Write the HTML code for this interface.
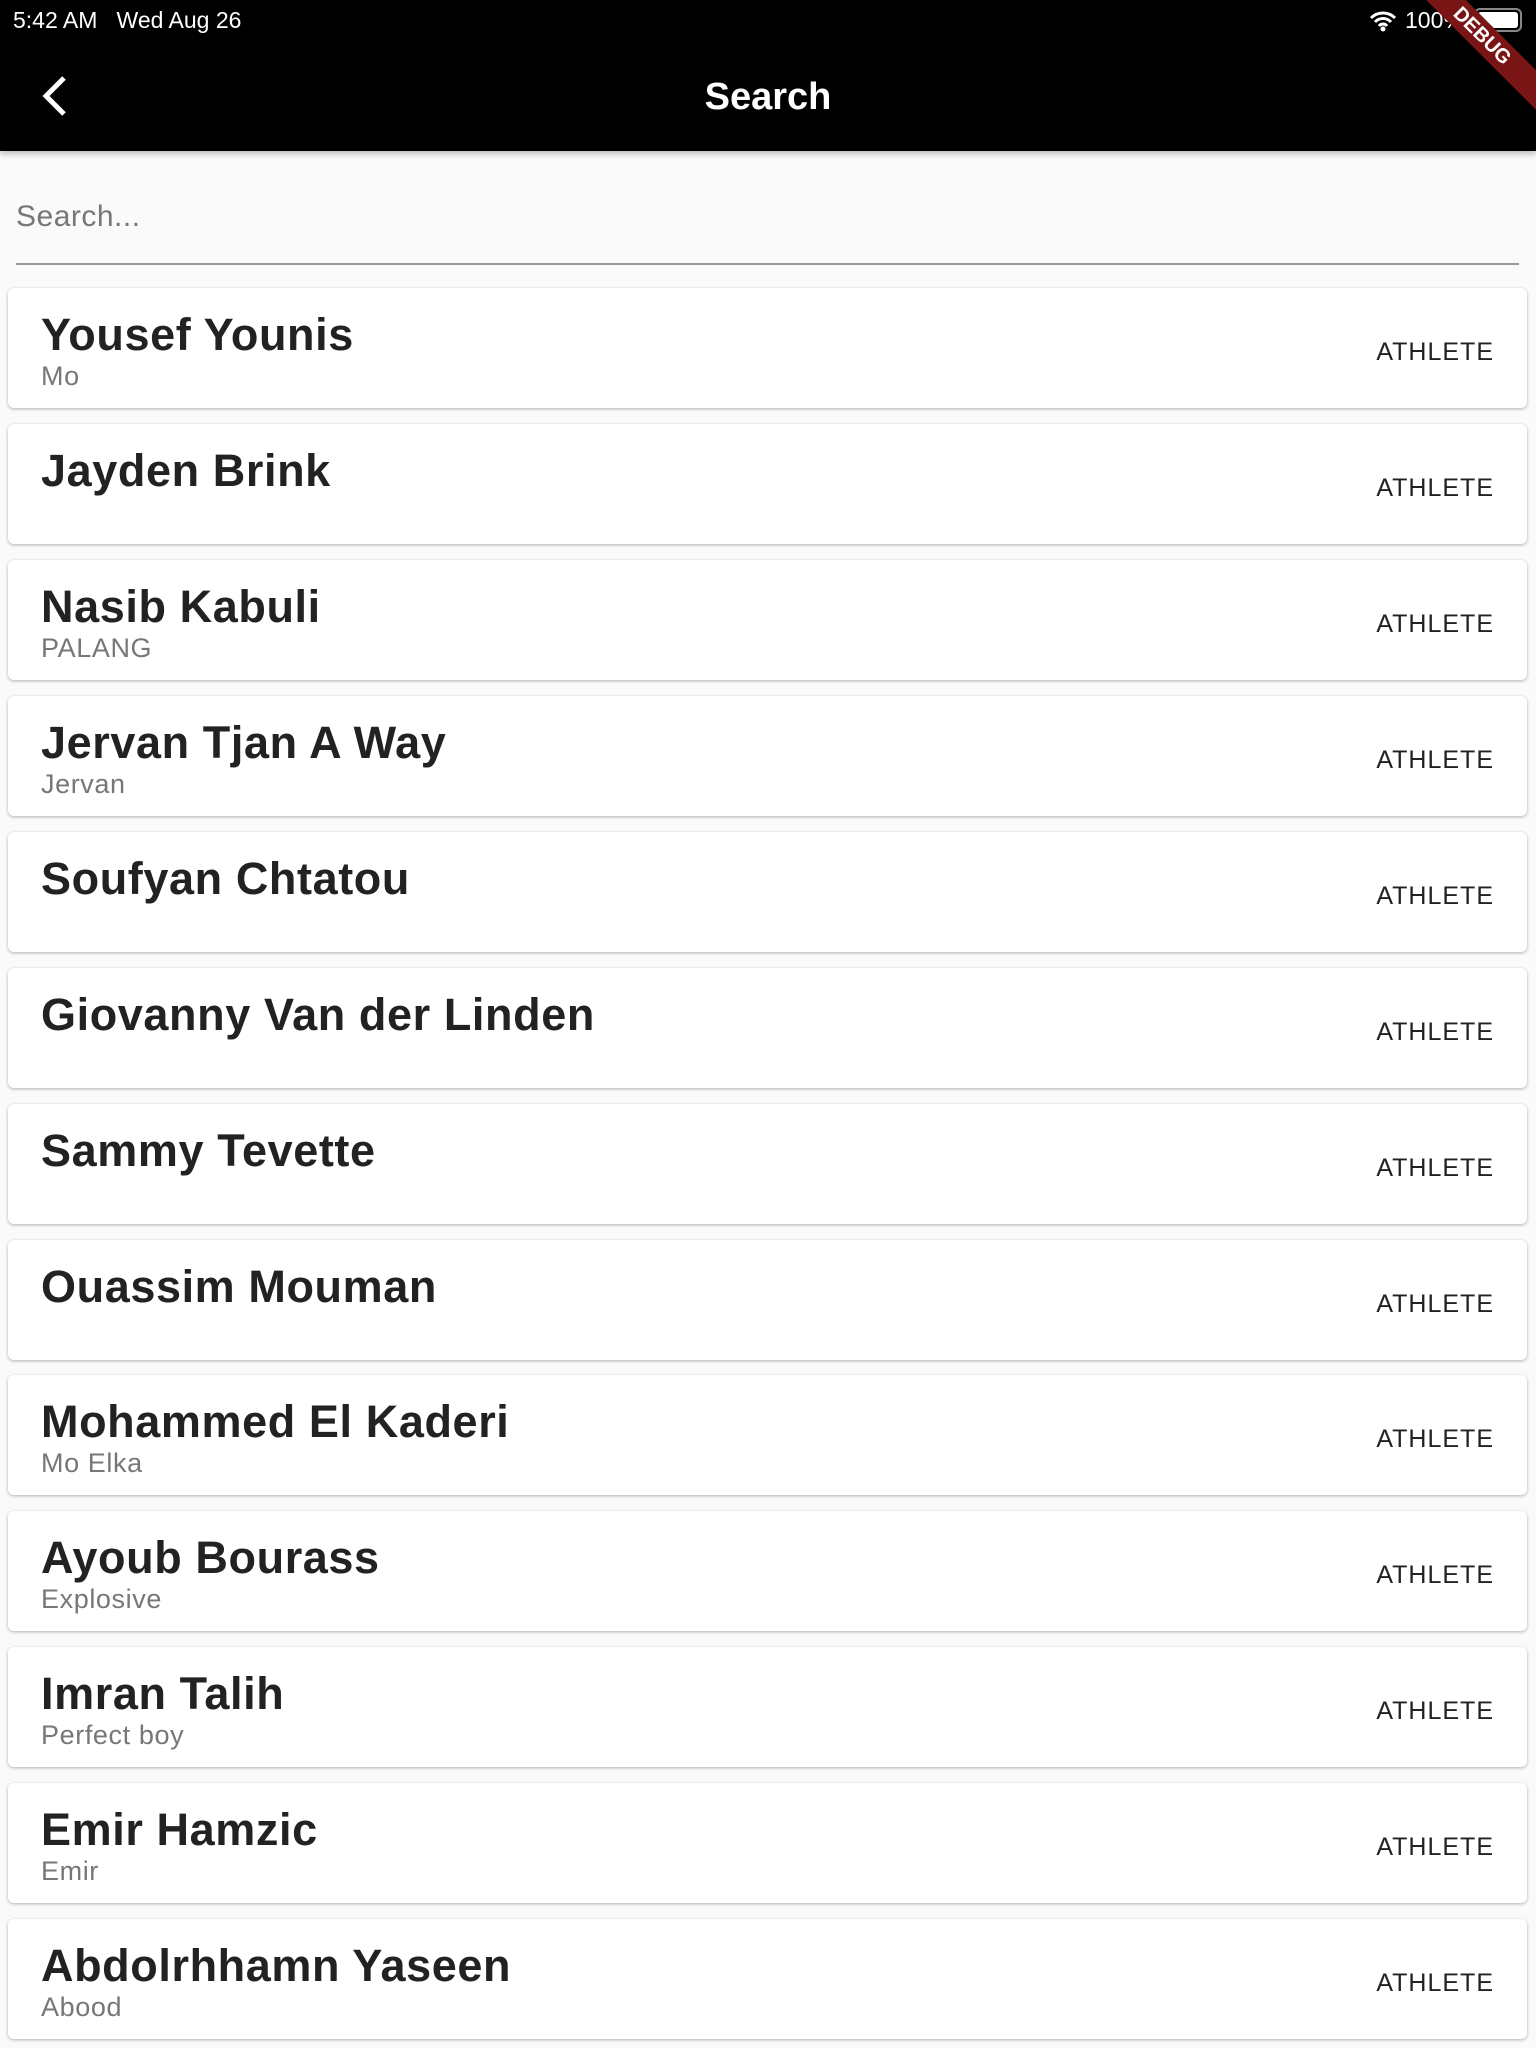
<!DOCTYPE html>
<html><head><meta charset="utf-8">
<style>
*{margin:0;padding:0;box-sizing:border-box}
body{width:1536px;height:2048px;background:#fafafa;font-family:"Liberation Sans",sans-serif;position:relative;overflow:hidden}
.bar{position:absolute;left:0;top:0;width:1536px;height:151px;background:#000;box-shadow:0 3px 6px rgba(0,0,0,.25)}
.st{position:absolute;top:7px;color:#fff;font-size:23px}
.title{position:absolute;left:0;width:1536px;top:76px;text-align:center;color:#fff;font-size:38px;font-weight:bold}
.field{position:absolute;left:16px;top:200px;color:#777;font-size:30px;letter-spacing:.5px}
.line{position:absolute;left:16px;width:1503px;top:263px;height:2px;background:#9a9a9a}
.card{position:absolute;left:8px;width:1519px;height:120px;background:#fff;border-radius:6px;box-shadow:0 1px 3px rgba(0,0,0,.3)}
.n{position:absolute;left:33px;top:21px;font-size:45px;font-weight:bold;color:#222;letter-spacing:.6px}
.s{position:absolute;left:33px;top:73px;font-size:27px;color:#777;letter-spacing:.6px}
.r{position:absolute;right:33px;top:50px;font-size:25px;color:#222;letter-spacing:1px}
</style></head><body>
<div class="bar">
<div class="st" style="left:13px">5:42 AM&nbsp;&nbsp;&nbsp;Wed Aug 26</div>
<svg style="position:absolute;left:1369px;top:10px" width="28" height="22" viewBox="0 0 28 22"><path d="M2 8a17 17 0 0 1 24 0M6 12a11 11 0 0 1 16 0M10 16a5 5 0 0 1 8 0" stroke="#fff" stroke-width="3" fill="none"/><circle cx="14" cy="19" r="2.5" fill="#fff"/></svg>
<div class="st" style="left:1405px">100%</div>
<div style="position:absolute;left:1474px;top:8px;width:48px;height:24px;border:2px solid #888;border-radius:6px;padding:2px"><div style="background:#fff;width:100%;height:100%;border-radius:3px"></div></div>
<svg style="position:absolute;left:40px;top:75px" width="30" height="42" viewBox="0 0 30 42"><path d="M24 3L6 21l18 18" stroke="#fff" stroke-width="5" fill="none"/></svg>
<div class="title">Search</div>
<div style="position:absolute;right:-66px;top:22px;width:240px;height:28px;background:#7a1515;transform:rotate(45deg);color:#fff;font-weight:bold;font-size:20px;text-align:center;line-height:28px">DEBUG</div>
</div>
<div class="field">Search...</div>
<div class="line"></div>
<div class="card" style="top:288px"><div class="n">Yousef Younis</div><div class="s">Mo</div><div class="r">ATHLETE</div></div>
<div class="card" style="top:424px"><div class="n">Jayden Brink</div><div class="r">ATHLETE</div></div>
<div class="card" style="top:560px"><div class="n">Nasib Kabuli</div><div class="s">PALANG</div><div class="r">ATHLETE</div></div>
<div class="card" style="top:696px"><div class="n">Jervan Tjan A Way</div><div class="s">Jervan</div><div class="r">ATHLETE</div></div>
<div class="card" style="top:832px"><div class="n">Soufyan Chtatou</div><div class="r">ATHLETE</div></div>
<div class="card" style="top:968px"><div class="n">Giovanny Van der Linden</div><div class="r">ATHLETE</div></div>
<div class="card" style="top:1104px"><div class="n">Sammy Tevette</div><div class="r">ATHLETE</div></div>
<div class="card" style="top:1240px"><div class="n">Ouassim Mouman</div><div class="r">ATHLETE</div></div>
<div class="card" style="top:1375px"><div class="n">Mohammed El Kaderi</div><div class="s">Mo Elka</div><div class="r">ATHLETE</div></div>
<div class="card" style="top:1511px"><div class="n">Ayoub Bourass</div><div class="s">Explosive</div><div class="r">ATHLETE</div></div>
<div class="card" style="top:1647px"><div class="n">Imran Talih</div><div class="s">Perfect boy</div><div class="r">ATHLETE</div></div>
<div class="card" style="top:1783px"><div class="n">Emir Hamzic</div><div class="s">Emir</div><div class="r">ATHLETE</div></div>
<div class="card" style="top:1919px"><div class="n">Abdolrhhamn Yaseen</div><div class="s">Abood</div><div class="r">ATHLETE</div></div>
</body></html>
